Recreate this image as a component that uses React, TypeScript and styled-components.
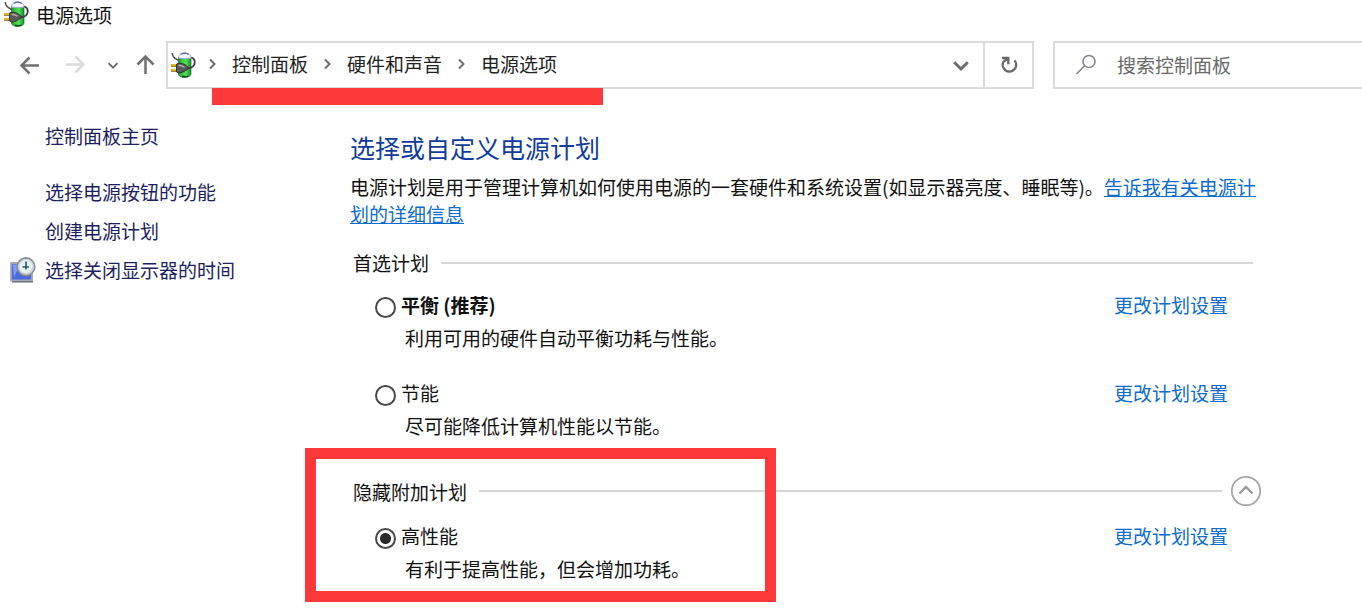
import React from 'react';
import styled, { createGlobalStyle } from 'styled-components';

const GlobalStyle = createGlobalStyle`
  *, *::before, *::after { box-sizing: border-box; }
  body {
    margin: 0;
    background: #fff;
    color: #111;
    font-family: "Noto Sans CJK SC", "Noto Sans", sans-serif;
    font-size: 19px;
    line-height: 27px;
  }
  button, input { font: inherit; color: inherit; }
  svg { flex: none; }
`;

const RED = '#fc3838';

const TitleBar = styled.header`
  display: flex;
  align-items: center;
  gap: 7px;
  height: 28px;
  padding-left: 4px;
`;

const WindowTitle = styled.h1`
  margin: 0;
  font-size: 19px;
  font-weight: 400;
`;

const Toolbar = styled.div`
  display: flex;
  align-items: center;
  margin-top: 13px;
`;

const NavButtons = styled.nav`
  display: flex;
  align-items: center;
  width: 166px;
  padding-left: 16px;
`;

const IconButton = styled.button<{ $width: number }>`
  display: flex;
  align-items: center;
  justify-content: center;
  flex: none;
  width: ${(p) => p.$width}px;
  height: 46px;
  padding: 0;
  border: 0;
  background: none;
`;

const AddressBar = styled.div`
  position: relative;
  display: flex;
  align-items: center;
  flex: 1;
  height: 48px;
  padding-left: 3px;
  border: 2px solid #dcdcdc;
`;

const Breadcrumb = styled.ol`
  display: flex;
  align-items: center;
  flex: 1;
  gap: 15px;
  margin: 0;
  padding: 0 0 4px 12px;
  list-style: none;
`;

const Crumb = styled.li`
  display: flex;
  align-items: center;
  gap: 15px;
  white-space: nowrap;
`;

const CrumbLink = styled.a`
  color: #222;
  text-decoration: none;
`;

const RefreshCell = styled.div`
  border-left: 2px solid #dcdcdc;
`;

const Underline = styled.div`
  position: absolute;
  top: 45px;
  left: 44px;
  width: 391px;
  height: 17px;
  background: ${RED};
`;

const SearchBox = styled.label`
  display: flex;
  align-items: center;
  gap: 20px;
  width: 309px;
  height: 48px;
  margin-left: 19px;
  padding-left: 20px;
  border: 2px solid #dcdcdc;
  border-right: 0;
`;

const SearchInput = styled.input`
  flex: 1;
  min-width: 0;
  padding: 0 0 2px;
  border: 0;
  outline: 0;
  background: none;
  &::placeholder { color: #6a6a6a; opacity: 1; }
`;

const Body = styled.div`
  display: flex;
  align-items: flex-start;
`;

const Sidebar = styled.aside`
  display: flex;
  flex-direction: column;
  flex: none;
  gap: 12px;
  width: 350px;
  padding: 33px 0 0 10px;
`;

const SideItem = styled.div<{ $spaced?: boolean }>`
  display: flex;
  align-items: center;
  margin-bottom: ${(p) => (p.$spaced ? 17 : 0)}px;
`;

const SideIcon = styled.span`
  display: flex;
  width: 35px;
`;

const SideLink = styled.a`
  color: #1c2260;
  text-decoration: none;
`;

const Main = styled.main`
  flex: 1;
  min-width: 0;
  padding: 41px 100px 24px 0;
`;

const Heading = styled.h2`
  margin: 0 0 9px;
  color: #0f3c9c;
  font-size: 25px;
  font-weight: 400;
  line-height: 34px;
`;

const Intro = styled.p`
  margin: 0 0 22px;
`;

const HelpLink = styled.a`
  color: #0a6ccf;
`;

const Group = styled.section`
  position: relative;
  & + & { margin-top: 36px; }
`;

const GroupHeader = styled.div<{ $inset?: boolean }>`
  display: flex;
  align-items: center;
  gap: 12px;
  margin: 0 ${(p) => (p.$inset ? 9 : 0)}px 15px 3px;
`;

const GroupTitle = styled.h3`
  margin: 0;
  font-size: 19px;
  font-weight: 400;
`;

const Rule = styled.span`
  flex: 1;
  height: 2px;
  background: #d6d6d6;
`;

const CollapseButton = styled.button`
  display: flex;
  width: 32px;
  height: 32px;
  margin-left: -4px;
  padding: 0;
  border: 0;
  background: none;
`;

const Plans = styled.div`
  display: flex;
  flex-direction: column;
  gap: 28px;
`;

const Plan = styled.div`
  display: grid;
  grid-template-columns: 26px 1fr 113px;
  row-gap: 6px;
  align-items: center;
  padding: 0 35px 0 25px;
`;

const Radio = styled.input`
  appearance: none;
  width: 21px;
  height: 21px;
  margin: 6px 0 0;
  border: 2px solid #4a4a4a;
  border-radius: 50%;
  background: #fff;
  &:checked { background: radial-gradient(circle, #2b2b2b 5px, #fff 6px); }
`;

const PlanName = styled.label<{ $bold?: boolean }>`
  font-weight: ${(p) => (p.$bold ? 700 : 400)};
`;

const PlanLink = styled.a`
  color: #0a6ccf;
  text-decoration: none;
  white-space: nowrap;
`;

const PlanText = styled.p`
  grid-column: 2 / -1;
  margin: 0 0 0 4px;
`;

const Highlight = styled.div`
  position: absolute;
  top: -27px;
  left: -45px;
  width: 471px;
  height: 154px;
  border: 11px solid ${RED};
  pointer-events: none;
`;

const PowerIcon = ({ id }: { id: string }) => (
  <svg width="25" height="26" viewBox="0 0 25 26" aria-hidden="true">
    <defs>
      <linearGradient id={id} x1="0" x2="1">
        <stop offset="0" stopColor="#14902a" />
        <stop offset="0.3" stopColor="#3cc94a" />
        <stop offset="0.6" stopColor="#4fe05a" />
        <stop offset="1" stopColor="#148a28" />
      </linearGradient>
    </defs>
    <path d="M7.500 5v17c0 2 2.500 3.400 6 3.400s6.500-1.400 6.500-3.400V5Z" fill={`url(#${id})`} stroke="#1e7a30" strokeWidth="0.700" />
    <path d="M7.500 6C7.500 2.500 10 .8 13.700.8S20 2.500 20 6c-3.500.8-9 .8-12.500 0Z" fill="#f4f5fd" stroke="#9da3cc" strokeWidth="0.900" />
    <path d="M9.800 2.500c2.300-1.700 5.500-1.700 7.800 0" fill="none" stroke="#5a60a0" strokeWidth="1.200" />
    <path d="M11 24.300c2 .8 4.500.6 6.500-.4" fill="none" stroke="#0b4a16" strokeWidth="1.500" />
    <path d="M1.200 1c.3 3.500 1.500 5 4.800 6.500l2 1" fill="none" stroke="#555" strokeWidth="1.600" />
    <path d="M20.300 5.500c2.700.9 3.800 3.200 3.300 5.800-.6 3-3.300 4.700-7.100 5" fill="none" stroke="#3f3f3f" strokeWidth="1.800" />
    <path d="M0 13.500h6M0 18.500h6" stroke="#7a5c00" strokeWidth="2.600" />
    <path d="M0 13h6M0 18h6" stroke="#f5cf2a" strokeWidth="1.700" />
    <path d="M5.500 12 8 11.300c3.500 0 6 1 8 3l1.300.9-.8 2.500-1.800.5C12.700 20 10.500 20.800 7.500 20.800l-2-.8Z" fill="#5a5a5a" stroke="#2c2c2c" strokeWidth="0.900" />
    <path d="M7.500 13.300c2.300 0 4.300.8 6 2" fill="none" stroke="#b0b0b0" strokeWidth="1.400" />
  </svg>
);

const DisplayClockIcon = () => (
  <svg width="26" height="26" viewBox="0 0 26 26" aria-hidden="true">
    <path d="M1 6h21v17.500H1Z" fill="#4a68df" stroke="#a5a8b4" strokeWidth="1.800" />
    <path d="M2.500 7.500h8L4 20Z" fill="#7f9af4" />
    <path d="M2 24.800h21" stroke="#70737c" strokeWidth="1.500" />
    <circle cx="16" cy="9.700" r="8.700" fill="#e6f1f4" stroke="#8b8f92" strokeWidth="1.800" />
    <circle cx="16" cy="9.700" r="7.200" fill="none" stroke="#c9d2d6" strokeWidth="1.200" />
    <path d="M16 4.500v8M12.500 10h6.500" stroke="#35566c" strokeWidth="1.700" />
  </svg>
);

const ArrowIcon = ({ rotate, color }: { rotate: number; color: string }) => (
  <svg width="22" height="22" viewBox="0 0 22 22" fill="none" stroke={color} strokeWidth="2.500" aria-hidden="true">
    <path d="M20 11.500H3M10.500 3.500 2.500 11.500l8 8" transform={`rotate(${rotate} 11 11)`} />
  </svg>
);

const ChevronDown = ({ size, stroke }: { size: number; stroke: number }) => (
  <svg width={size} height={size} viewBox="0 0 16 16" fill="none" stroke="#6b6b6b" strokeWidth={stroke} aria-hidden="true">
    <path d="m2 5.500 6 6 6-6" />
  </svg>
);

const CrumbChevron = () => (
  <svg width="9" height="12" viewBox="0 0 9 12" fill="none" stroke="#6e6e6e" strokeWidth="2" aria-hidden="true">
    <path d="m2 2.500 4.500 4.500L2 11.500" />
  </svg>
);

const RefreshIcon = () => (
  <svg width="20" height="20" viewBox="0 0 20 20" fill="none" stroke="#6a6a6a" strokeWidth="2.400" aria-hidden="true">
    <path d="M15.600 5.500A6.700 6.700 0 1 1 4.600 6.500L9 3.500" />
    <path d="M3 3h6.300v6.200" />
  </svg>
);

const SearchIcon = () => (
  <svg width="22" height="22" viewBox="0 0 22 22" fill="none" stroke="#85858f" strokeWidth="1.600" aria-hidden="true">
    <circle cx="14" cy="7.500" r="6" />
    <path d="M9.700 11.800 1.500 20" />
  </svg>
);

const CollapseIcon = () => (
  <svg width="32" height="32" viewBox="0 0 32 32" fill="none" aria-hidden="true">
    <circle cx="16" cy="16" r="14.200" stroke="#a6a6a6" strokeWidth="1.800" />
    <path d="m9.500 18.500 6.500-6.500 6.500 6.500" stroke="#9a9a9a" strokeWidth="2.300" />
  </svg>
);

interface PlanInfo {
  id: string;
  name: string;
  text: string;
  bold?: boolean;
}

const preferredPlans: PlanInfo[] = [
  { id: 'balanced', name: '平衡 (推荐)', text: '利用可用的硬件自动平衡功耗与性能。', bold: true },
  { id: 'saver', name: '节能', text: '尽可能降低计算机性能以节能。' },
];

const extraPlans: PlanInfo[] = [
  { id: 'performance', name: '高性能', text: '有利于提高性能，但会增加功耗。' },
];

const crumbs = ['控制面板', '硬件和声音', '电源选项'];

const PlanList = ({ plans }: { plans: PlanInfo[] }) => (
  <Plans>
    {plans.map((plan) => (
      <Plan key={plan.id}>
        <Radio type="radio" name="plan" id={plan.id} defaultChecked={plan.id === 'performance'} />
        <PlanName htmlFor={plan.id} $bold={plan.bold}>{plan.name}</PlanName>
        <PlanLink href="#">更改计划设置</PlanLink>
        <PlanText>{plan.text}</PlanText>
      </Plan>
    ))}
  </Plans>
);

export default function App() {
  return (
    <>
      <GlobalStyle />
      <TitleBar>
        <PowerIcon id="title-power" />
        <WindowTitle>电源选项</WindowTitle>
      </TitleBar>
      <Toolbar>
        <NavButtons>
          <IconButton $width={28} aria-label="后退"><ArrowIcon rotate={0} color="#707070" /></IconButton>
          <IconButton $width={62} aria-label="前进" disabled><ArrowIcon rotate={180} color="#dcdcdc" /></IconButton>
          <IconButton $width={14} aria-label="最近位置"><ChevronDown size={12} stroke={2.6} /></IconButton>
          <IconButton $width={52} aria-label="向上"><ArrowIcon rotate={90} color="#707070" /></IconButton>
        </NavButtons>
        <AddressBar>
          <PowerIcon id="address-power" />
          <Breadcrumb>
            {crumbs.map((crumb) => (
              <Crumb key={crumb}>
                <CrumbChevron />
                <CrumbLink href="#">{crumb}</CrumbLink>
              </Crumb>
            ))}
          </Breadcrumb>
          <IconButton $width={44} aria-label="展开"><ChevronDown size={18} stroke={2.6} /></IconButton>
          <RefreshCell>
            <IconButton $width={47} aria-label="刷新"><RefreshIcon /></IconButton>
          </RefreshCell>
          <Underline />
        </AddressBar>
        <SearchBox>
          <SearchIcon />
          <SearchInput type="text" placeholder="搜索控制面板" aria-label="搜索控制面板" />
        </SearchBox>
      </Toolbar>
      <Body>
        <Sidebar>
          <SideItem $spaced><SideIcon /><SideLink href="#">控制面板主页</SideLink></SideItem>
          <SideItem><SideIcon /><SideLink href="#">选择电源按钮的功能</SideLink></SideItem>
          <SideItem><SideIcon /><SideLink href="#">创建电源计划</SideLink></SideItem>
          <SideItem>
            <SideIcon><DisplayClockIcon /></SideIcon>
            <SideLink href="#">选择关闭显示器的时间</SideLink>
          </SideItem>
        </Sidebar>
        <Main>
          <Heading>选择或自定义电源计划</Heading>
          <Intro>
            电源计划是用于管理计算机如何使用电源的一套硬件和系统设置(如显示器亮度、睡眠等)。<HelpLink href="#">告诉我有关电源计划的详细信息</HelpLink>
          </Intro>
          <Group>
            <GroupHeader $inset>
              <GroupTitle>首选计划</GroupTitle>
              <Rule />
            </GroupHeader>
            <PlanList plans={preferredPlans} />
          </Group>
          <Group>
            <GroupHeader>
              <GroupTitle>隐藏附加计划</GroupTitle>
              <Rule />
              <CollapseButton aria-label="隐藏附加计划"><CollapseIcon /></CollapseButton>
            </GroupHeader>
            <PlanList plans={extraPlans} />
            <Highlight />
          </Group>
        </Main>
      </Body>
    </>
  );
}
